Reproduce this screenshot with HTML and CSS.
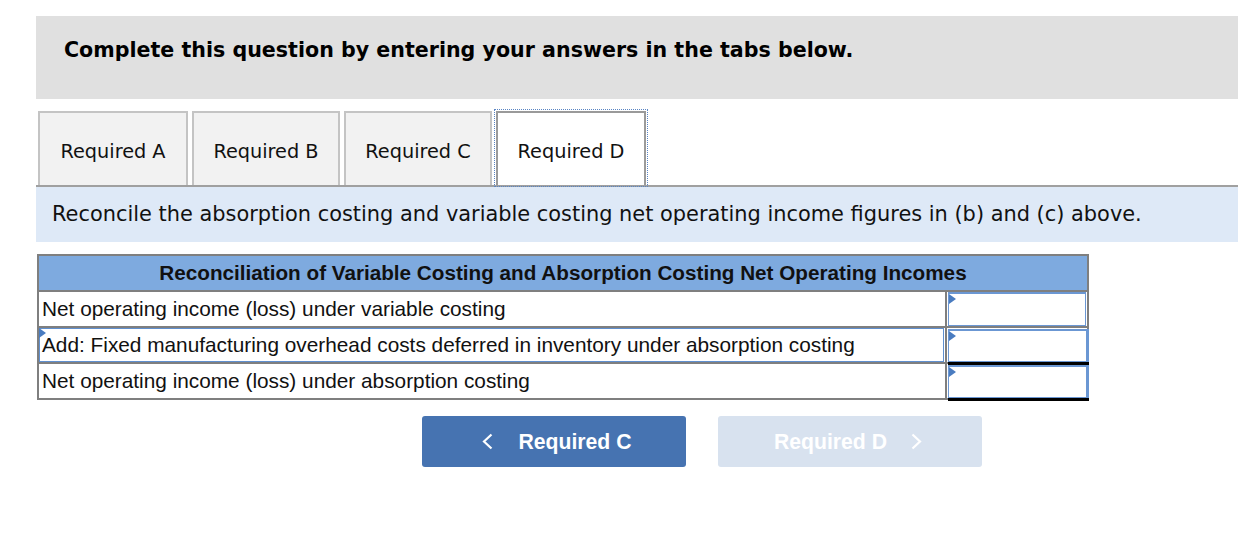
FILE: index.html
```html
<!DOCTYPE html>
<html>
<head>
<meta charset="utf-8">
<link rel="stylesheet" href="styles.css">
</head>
<body>
<div class="page">
  <div class="header">Complete this question by entering your answers in the tabs below.</div>
  <div class="tabs">
    <div class="tab w150">Required A</div>
    <div class="tab w148">Required B</div>
    <div class="tab w148">Required C</div>
    <div class="tab w150 active">Required D</div>
  </div>
  <div class="instruction">Reconcile the absorption costing and variable costing net operating income figures in (b) and (c) above.</div>
  <table class="recon">
    <tr><th colspan="2">Reconciliation of Variable Costing and Absorption Costing Net Operating Incomes</th></tr>
    <tr>
      <td class="label"><div class="lbl">Net operating income (loss) under variable costing</div></td>
      <td class="val"><div class="inp"><span class="tri"></span></div></td>
    </tr>
    <tr>
      <td class="label"><div class="lbl focus"><span class="tri"></span>Add: Fixed manufacturing overhead costs deferred in inventory under absorption costing</div></td>
      <td class="val"><div class="inp under"><span class="tri"></span></div></td>
    </tr>
    <tr>
      <td class="label"><div class="lbl">Net operating income (loss) under absorption costing</div></td>
      <td class="val"><div class="inp under"><span class="tri"></span></div></td>
    </tr>
  </table>
  <div class="nav">
    <div class="btn prev">
      <svg class="chev" width="11" height="17" viewBox="0 0 11 17"><polyline points="9.5,1.5 2,8.5 9.5,15.5" fill="none" stroke="#fff" stroke-width="2.2"/></svg>
      <span>Required C</span>
    </div>
    <div class="btn next">
      <span>Required D</span>
      <svg class="chev" width="11" height="17" viewBox="0 0 11 17"><polyline points="1.5,1.5 9,8.5 1.5,15.5" fill="none" stroke="#fff" stroke-width="2.2"/></svg>
    </div>
  </div>
</div>
</body>
</html>
```
FILE: styles.css
```css
html, body { margin: 0; padding: 0; background: #fff; }
.page { padding: 16px 0 0 36px; }
.header {
  background: #e0e0e0;
  height: 83px;
  box-sizing: border-box;
  padding: 22px 0 0 28px;
  font-family: "DejaVu Sans", Verdana, sans-serif;
  font-weight: bold;
  font-size: 20.6px;
  line-height: 24px;
  color: #000;
  white-space: nowrap;
}
.tabs {
  margin-top: 12px;
  display: flex;
  gap: 4px;
  padding-left: 2px;
  border-bottom: 2px solid #a0a0a0;
  height: 76px;
  box-sizing: border-box;
}
.tab {
  box-sizing: border-box;
  height: 74px;
  display: flex;
  align-items: center;
  justify-content: center;
  background: #f2f2f2;
  border: 2px solid #c4c4c4;
  border-bottom: none;
  font-family: "DejaVu Sans", Verdana, sans-serif;
  font-size: 19.3px;
  color: #111;
  padding-top: 4px;
  white-space: nowrap;
}
.w150 { width: 150px; }
.w148 { width: 148px; }
.tab.active {
  background: #fff;
  border-color: #9a9a9a;
  outline: 1px dotted #5a85c4;
  outline-offset: 1px;
}
.instruction {
  background: #dee9f7;
  height: 55px;
  box-sizing: border-box;
  padding: 14px 0 0 16px;
  font-family: "DejaVu Sans", Verdana, sans-serif;
  font-size: 20.9px;
  line-height: 26px;
  color: #111;
  white-space: nowrap;
}
.recon {
  margin: 12px 0 0 1px;
  width: 1052px;
  border-collapse: collapse;
  font-family: "Liberation Sans", Arial, sans-serif;
  font-size: 20.8px;
  color: #111;
}
.recon th {
  background: #7eaadf;
  border: 2px solid #7f7f7f;
  height: 36px;
  padding: 0;
  font-weight: bold;
  font-size: 20.7px;
  box-sizing: border-box;
  white-space: nowrap;
}
.recon td {
  border: 2px solid #7f7f7f;
  padding: 0;
  height: 36px;
  box-sizing: border-box;
}
.recon td.label { width: 908px; }
.lbl {
  position: relative;
  height: 34px;
  box-sizing: border-box;
  padding: 0 0 0 3px;
  line-height: 34px;
  white-space: nowrap;
}
.lbl.focus {
  border: 1px solid #5f8fcf;
  margin: 0 1px 0 0;
  padding-left: 2px;
  line-height: 32px;
}
.inp {
  position: relative;
  margin: 0 1px 0 1px;
  height: 34px;
  box-sizing: border-box;
  border: 1px solid #6b97d3;
  border-top-width: 2px;
  background: #fff;
}
.inp.under { height: 33px; border-bottom: 1px solid #6b97d3; box-shadow: 0 3px 0 #000; margin-right: -2px; border-right-width: 3px; }
.tri {
  position: absolute;
  left: 0;
  top: 0;
  width: 0;
  height: 0;
  border-top: 5px solid transparent;
  border-bottom: 5px solid transparent;
  border-left: 7px solid #4a7cc0;
}
.lbl.focus .tri { top: -1px; left: -1px; }
.nav {
  margin: 16px 0 0 386px;
  display: flex;
  gap: 32px;
}
.btn {
  width: 264px;
  height: 51px;
  border-radius: 3px;
  display: flex;
  align-items: center;
  justify-content: center;
  font-family: "Liberation Sans", Arial, sans-serif;
  font-weight: bold;
  font-size: 21.2px;
  color: #fff;
  box-sizing: border-box;
}
.btn.prev { background: #4673b1; gap: 25px; padding-left: 6px; }
.btn.next { background: #d8e2ef; gap: 24px; padding-right: 4px; }
.chev { display: block; }
```
